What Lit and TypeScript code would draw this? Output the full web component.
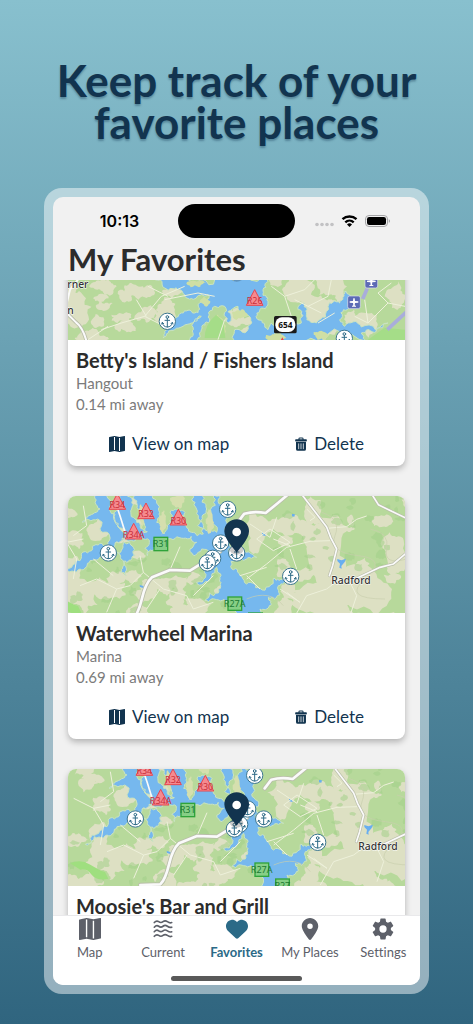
import { LitElement, html, svg, css } from "lit";
import { customElement, property, query } from "lit/decorators.js";
import { classMap } from "lit/directives/class-map.js";

type Pt = [number, number];

/** Deterministic random source, so that a map always looks the same. */
function randomFrom(seed: number) {
  let s = seed * 7919 + 17;
  return () => {
    s = (s * 1103515245 + 12345) % 2147483648;
    return s / 2147483648;
  };
}

function parse(points: string): Pt[] {
  return points.trim().split(/\s+/).map((p) => p.split(",").map(Number) as Pt);
}

/** Closed outline whose edges are broken up like a natural shoreline. */
function shore(points: string, seed: number, rough = 0.32, depth = 3): string {
  const rnd = randomFrom(seed);
  let pts = parse(points);
  for (let d = 0; d < depth; d++) {
    const next: Pt[] = [];
    pts.forEach((a, i) => {
      const b = pts[(i + 1) % pts.length];
      const dx = b[0] - a[0];
      const dy = b[1] - a[1];
      const k = (rnd() - 0.5) * 2 * rough;
      next.push(a);
      if (Math.hypot(dx, dy) > 8) {
        next.push([(a[0] + b[0]) / 2 - dy * k, (a[1] + b[1]) / 2 + dx * k]);
      }
    });
    pts = next;
  }
  return "M" + pts.map((p) => p[0].toFixed(1) + " " + p[1].toFixed(1)).join("L") + "Z";
}

/** Scattered patches of open land: x, y, width, height. */
function patches(list: number[][], seed: number): string {
  const rnd = randomFrom(seed);
  return list
    .map(([x, y, w, h], n) => {
      const ring: string[] = [];
      for (let i = 0; i < 10; i++) {
        const a = (i / 10) * Math.PI * 2;
        const r = 0.3 + rnd() * 0.3;
        ring.push(`${(x + Math.cos(a) * w * r).toFixed(0)},${(y + Math.sin(a) * h * r).toFixed(0)}`);
      }
      return shore(ring.join(" "), seed + n, 0.25, 2);
    })
    .join("");
}

function scatter(count: number, x0: number, x1: number, y0: number, y1: number, size: number, seed: number): number[][] {
  const rnd = randomFrom(seed);
  return Array.from({ length: count }, () => [
    x0 + rnd() * (x1 - x0),
    y0 + rnd() * (y1 - y0),
    size * (0.5 + rnd()),
    size * (0.4 + rnd() * 0.8),
  ]);
}

const anchor = (x: number, y: number) => svg`
  <g transform="translate(${x} ${y})">
    <circle r="24.5" fill="#fff" stroke="#3c7690" stroke-width="3"></circle>
    <g fill="none" stroke="#2f6b87" stroke-width="3" stroke-linecap="round" stroke-linejoin="round">
      <circle cy="-13" r="4"></circle>
      <path d="M0-9V17M-7-3H7M-15 4c1 8 7 13 15 13s14-5 15-13M-17 8l2-5 4 4M17 8l-2-5-4 4"></path>
    </g>
  </g>`;

const redMark = (x: number, y: number, label: string) => svg`
  <path d="M${x} ${y - 24}l25 47h-50z" fill="#f58a8f" stroke="#e8464f" stroke-width="3"></path>
  <text class="mark red" x=${x} y=${y + 19}>${label}</text>`;

const greenMark = (x: number, y: number, label: string) => svg`
  <rect x=${x - 20} y=${y - 20} width="41" height="40" fill="#86cf86" stroke="#2fa33a" stroke-width="4"></rect>
  <text class="mark green" x=${x} y=${y + 10}>${label}</text>`;

const airport = (x: number, y: number) => svg`
  <rect x=${x - 19} y=${y - 19} width="38" height="38" rx="6" fill="#5c6bb5" stroke="#dfe3ee" stroke-width="2"></rect>
  <path transform="translate(${x} ${y})" d="M-2-12h4l1 8 10 1v4l-10 1-1 7 4 2v2H-6v-2l4-2-1-7-10-1v-4l10-1z" fill="#fff"></path>`;

const pin = (x: number, y: number) => svg`
  <ellipse cx=${x} cy=${y - 8} rx="20" ry="14" fill="#111" opacity=".22"></ellipse>
  <path d="M${x} ${y}c-9-14-37-40-37-64a37 36 0 0 1 74 0c0 24-28 50-37 64z" fill="#12344f"></path>
  <circle cx=${x} cy=${y - 62} r="13" fill="#fff"></circle>`;

const bayLand = patches(
  [
    ...scatter(24, -60, 250, 30, 400, 60, 4),
    ...scatter(14, 270, 500, 250, 400, 60, 9),
    ...scatter(22, 560, 1040, 30, 400, 64, 12),
    [810, 220, 130, 260], [900, 300, 240, 140], [790, 340, 190, 110], [60, 310, 120, 120], [690, 110, 120, 60],
    [590, 130, 60, 130], [760, 60, 60, 90], [1000, 200, 80, 160], [140, 300, 130, 60],
  ],
  3
);
const bayShade = patches([...scatter(40, -60, 500, 190, 400, 26, 31), ...scatter(34, 640, 1040, 20, 240, 26, 44)], 7);
const bayWater =
  shore("100,15 145,15 165,75 190,130 200,150 165,168 150,190 120,205 90,215 60,240 15,258 -5,268 15,240 60,215 95,185 130,170 142,130 120,95 66,100 85,80 120,60", 2) +
  shore("180,15 200,15 215,60 230,100 250,130 262,128 245,90 232,50 222,15 275,15 295,60 290,100 312,135 330,95 345,60 375,70 365,105 395,130 430,135 415,80 395,30 400,15 430,15 440,60 425,100 445,130 470,130 452,80 462,15 485,15 480,60 500,100 515,140 505,190 530,210 560,190 590,205 550,215 512,232 545,262 560,285 600,298 640,268 672,262 655,290 660,318 625,325 628,350 600,360 610,420 520,420 505,350 470,332 435,335 475,312 480,270 470,235 430,285 410,280 440,235 452,190 425,180 405,200 390,180 410,160 370,148 320,150 290,180 262,200 268,160 250,150 215,155 185,150 195,120", 5) +
  shore("190,160 220,175 225,200 195,215 198,260 182,250 190,215 172,190", 8);
const bayIslands = patches([[308, 100, 26, 70], [450, 100, 24, 70], [245, 80, 16, 80], [352, 40, 50, 40]], 15);

const bayMap = svg`
  <rect x="-100" width="1200" height="450" fill="#b7d99b"></rect>
  <path d=${bayLand} fill="#dde0c3"></path>
  <path d=${bayShade} fill="#a3cf88" opacity=".55"></path>
  <path d="M-50 325q30-14 60 4t44 22l10 20q-34 8-50-12T-20 344z" fill="#9fdf7f"></path>
  <path d=${bayWater} fill="#76b8ee" stroke="#c9e3c0" stroke-width="3" fill-rule="nonzero"></path>
  <path d=${bayIslands} fill="#d5dfae"></path>
  <path d="M832 210l12 4 14-5-4 10-10 12 1 8-7-3 2-12-8-8zM606 130l10 5 1 6-10-2zM696 75l9 1-2 7-7-1zM239 288l12 3-1 6-10-3z" fill="#68aef0"></path>
  <g fill="none" stroke="#edf0da" stroke-width="3" stroke-linejoin="round">
    <path d="M-40 130l60 30 50-10M20 160l30 50-10 60M70 50l10 60-40 30M240 200l10 50-40 40-40 10-30 70M170 300l-60-30-50 20M250 250l60 50 70 20 20 40 60-20M400 320l60-60M330 243l30-70M300 300l-40 60M100 210l60 50"></path>
    <path d="M570 105l60 40 20-60M590 150l40-30 60 40-50 25zM560 270l60-45 60-50 70-18 60-2M690 180l20 60M800 118l60-5 30-22 30-10M640 150l50 20M740 60l25 25-15 10M560 260l40 40M540 260l80-25M700 390l40-70 60-20 40-30M720 340l-60-40M870 280l20 40-20 60M680 310l40 30"></path>
  </g>
  <path d="M785 70q60 20 40 70t70 60 20 70 60 60M560 330q70-30 110 20M930 120q60 10 50 60t60 30" fill="none" stroke="#c9cfae" stroke-width="2"></path>
  <g fill="none" stroke-linejoin="round" stroke-linecap="round">
    <path d="M160 390l60-2q15-14 26-60t30-63l54-22 60 2 45-28 45-30M533 100l20-26q30-8 64-2l34-28 36-30" stroke="#b9bda9" stroke-width="13"></path>
    <path d="M160 390l60-2q15-14 26-60t30-63l54-22 60 2 45-28 45-30M533 100l20-26q30-8 64-2l34-28 36-30" stroke="#fafafa" stroke-width="8"></path>
    <path d="M722 12l78 102 12 32 18 34-12 50-10 30M935 15l20 32 40 20 60 28M890 268l70-33 40-10 36-30 20-6" stroke="#b9bda9" stroke-width="9"></path>
    <path d="M722 12l78 102 12 32 18 34-12 50-10 30M935 15l20 32 40 20 60 28M890 268l70-33 40-10 36-30 20-6M166 40l14 40 14 45" stroke="#fafafa" stroke-width="5"></path>
  </g>
  ${redMark(172, 38, "R34")}${redMark(258, 66, "R32")}${redMark(355, 85, "R30")}${redMark(221, 127, "R34A")}
  ${greenMark(302, 165, "R31")}${greenMark(524, 344, "R27A")}${greenMark(586, 392, "R27")}
  ${anchor(145, 192)}${anchor(503, 61)}${anchor(482, 162)}${anchor(458, 208)}${anchor(442, 222)}${anchor(530, 192)}${anchor(692, 262)}
  <text class="town" x="814" y="284">Radford</text>`;

const isleLand = patches(
  [
    ...scatter(24, 0, 330, 150, 360, 48, 21),
    ...scatter(16, 520, 900, 160, 360, 60, 27),
    [20, 260, 80, 110], [110, 190, 80, 50], [690, 200, 110, 90], [740, 260, 120, 90], [880, 300, 120, 80],
    [790, 190, 80, 80], [500, 280, 60, 50], [980, 220, 60, 90], [300, 260, 70, 80],
  ],
  41
);
const isleWater = shore(
  "250,165 350,165 390,175 480,165 600,165 585,200 600,225 580,255 570,290 600,320 610,300 640,320 700,300 690,260 708,240 715,280 745,300 780,250 815,240 830,205 845,215 838,260 815,290 830,310 880,312 960,300 925,325 880,330 900,355 700,360 510,360 500,320 540,310 548,285 510,250 480,300 470,250 440,250 425,295 400,320 380,355 364,350 376,320 400,280 370,300 345,310 320,320 285,345 290,325 320,300 340,270 380,270 395,240 420,215 385,225 350,215 335,200 290,195",
  6
);
const isleIslands = patches([[380, 182, 70, 20], [515, 275, 56, 30], [455, 310, 40, 70], [620, 345, 60, 30], [410, 235, 30, 30], [760, 335, 60, 28]], 18);

const isleMap = svg`
  <rect width="1011" height="360" fill="#b7d99b"></rect>
  <path d=${isleLand} fill="#dde0c3"></path>
  <path d=${isleWater} fill="#76b8ee" stroke="#c9e3c0" stroke-width="3"></path>
  <path d=${isleIslands} fill="#cfdfa4"></path>
  <path d="M410 345q0-40 34-70l22 20 6 50zM900 350l50-36 61 6v40H900z" fill="#a5dd88"></path>
  <g fill="none" stroke="#edf0da" stroke-width="3" stroke-linejoin="round">
    <path d="M100 320l60-20 70-20 50-60 70-30M205 230l30 50M230 280l60 30M290 230l100-20 50 10M240 190l60 30M60 350l60-40M610 190l40 30 60-20 30-30M650 220l20 60M720 250l60-30 10-50M680 230l80 40M860 280l40 20 60-60-30-30 40-30M900 300l-10-70M960 240l51 10M750 300l50-30M450 350l20-60"></path>
  </g>
  <path d="M-6 268l30 30q20 14 32 58" fill="none" stroke="#b9bda9" stroke-width="11"></path>
  <path d="M-6 268l30 30q20 14 32 58M-6 250l12-50 24-30" fill="none" stroke="#fafafa" stroke-width="6"></path>
  <path d="M898 196l-14 32M1020 262l-62 58" fill="none" stroke="#a9addb" stroke-width="11"></path>
  ${redMark(560, 224, "R26")}
  <path d="M643 343l9 16h-18z" fill="#e8464f"></path>
  ${airport(858, 238)}${airport(910, 176)}
  <rect x="618" y="279" width="68" height="52" rx="5" fill="#1b1b1b"></rect>
  <rect x="622" y="283" width="60" height="44" rx="20" fill="#fff"></rect>
  <text class="route" x="652" y="314">654</text>
  ${anchor(298, 295)}${anchor(829, 346)}
  <text class="town" x="-2" y="196">rner</text>
  <text class="town" x="-2" y="273">n</text>`;

const MAP_ICON =
  "M16 .5a.5.5 0 0 0-.598-.49L10.5.99 5.598.01a.5.5 0 0 0-.196 0l-5 1A.5.5 0 0 0 0 1.5v14a.5.5 0 0 0 .598.49l4.902-.98 4.902.98a.5.5 0 0 0 .196 0l5-1A.5.5 0 0 0 16 14.5zM5 14.09V1.11l.5-.1.5.1v12.98l-.402-.08a.5.5 0 0 0-.196 0zm5 .8V1.91l.402.08a.5.5 0 0 0 .196 0L11 1.91v12.98l-.5.1z";

const mapIcon = html`<svg viewBox="0 0 16 16" aria-hidden="true"><path fill="currentColor" d=${MAP_ICON} /></svg>`;
const trashIcon = html`<svg viewBox="1 0 14 16" aria-hidden="true">
  <path fill="currentColor" d="M2 2.500h3V2a1.700 1.700 0 0 1 1.700-1.700h2.600A1.700 1.700 0 0 1 11 2v.5h3a.8.8 0 0 1 .8.8v.9a.8.8 0 0 1-.8.8H2a.8.8 0 0 1-.8-.8v-.9a.8.8 0 0 1 .8-.8zm4.300 0h3.400v-.9H6.300zM2.200 5.800h11.600V14a2 2 0 0 1-2 2H4.200a2 2 0 0 1-2-2z" />
  <path stroke="#fff" stroke-width=".9" d="M5.300 7.300v6.700M8 7.300v6.700M10.700 7.300v6.700" />
</svg>`;

const tabs = [
  { label: "Map", icon: mapIcon },
  {
    label: "Current",
    icon: html`<svg viewBox="0 0 24 24" aria-hidden="true">
      <g fill="none" stroke="currentColor" stroke-width="1.800" stroke-linecap="round">
        ${[5, 10, 15, 20].map((y) => svg`<path d="M2.500 ${y}q2.400-2.800 4.800-1t4.700 0 4.800 0 4.700 1" />`)}
      </g>
    </svg>`,
  },
  {
    label: "Favorites",
    icon: html`<svg viewBox="0 0 512 512" aria-hidden="true">
      <path fill="currentColor" d="M47.600 300.400L228.300 469.100c7.500 7 17.400 10.900 27.700 10.900s20.200-3.900 27.700-10.900L464.400 300.400c30.400-28.300 47.600-68 47.600-109.500v-5.800c0-69.900-50.500-129.500-119.400-141C347 36.500 300.600 51.400 268 84L256 96 244 84c-32.600-32.600-79-47.500-124.600-39.900C50.500 55.600 0 115.200 0 185.100v5.800c0 41.500 17.200 81.200 47.600 109.500z" />
    </svg>`,
  },
  {
    label: "My Places",
    icon: html`<svg viewBox="0 0 384 512" aria-hidden="true">
      <path fill="currentColor" d="M215.700 499.200C267 435 384 279.400 384 192 384 86 298 0 192 0S0 86 0 192c0 87.400 117 243 168.300 307.200 12.300 15.300 35.100 15.300 47.400 0zM192 128a64 64 0 1 1 0 128 64 64 0 1 1 0-128z" />
    </svg>`,
  },
  {
    label: "Settings",
    icon: html`<svg viewBox="2 2 20 20" aria-hidden="true">
      <path fill="currentColor" d="M19.140 12.940c.04-.3.06-.61.06-.94 0-.32-.02-.64-.07-.94l2.030-1.580a.49.49 0 0 0 .12-.61l-1.920-3.320a.488.488 0 0 0-.59-.22l-2.390.96c-.5-.38-1.030-.7-1.620-.94l-.36-2.540a.484.484 0 0 0-.48-.41h-3.840c-.24 0-.43.17-.47.41l-.36 2.540c-.59.24-1.130.57-1.620.94l-2.390-.96a.48.48 0 0 0-.59.22L2.740 8.870c-.12.21-.08.47.12.61l2.030 1.580c-.05.3-.09.63-.09.94s.02.64.07.94l-2.030 1.580a.49.49 0 0 0-.12.61l1.920 3.320c.12.22.37.29.59.22l2.390-.96c.5.38 1.030.7 1.620.94l.36 2.540c.05.24.24.41.48.41h3.840c.24 0 .44-.17.47-.41l.36-2.540c.59-.24 1.130-.56 1.620-.94l2.390.96c.22.08.47 0 .59-.22l1.920-3.320a.48.48 0 0 0-.12-.61zM12 15.300a3.300 3.300 0 1 1 0-6.600 3.300 3.300 0 0 1 0 6.600z" />
    </svg>`,
  },
];

interface Place {
  name: string;
  kind: string;
  distance: string;
  scene: "isle" | "bay";
  view: [number, number];
}

const places: Place[] = [
  { name: "Betty's Island / Fishers Island", kind: "Hangout", distance: "0.14 mi away", scene: "isle", view: [0, 0] },
  { name: "Waterwheel Marina", kind: "Marina", distance: "0.69 mi away", scene: "bay", view: [24, 21] },
  { name: "Moosie's Bar and Grill", kind: "Restaurant", distance: "0.72 mi away", scene: "bay", view: [-57, 42] },
];

@customElement("place-card")
export class PlaceCard extends LitElement {
  @property({ attribute: false }) place!: Place;

  static styles = css`
    :host {
      display: block;
      flex: none;
      overflow: hidden;
      border-radius: 8px;
      background: #fff;
      box-shadow: 0 3px 6px rgba(0, 0, 0, 0.26);
    }
    .map {
      display: block;
      width: 100%;
      height: 117px;
    }
    .map text {
      font-family: "Noto Sans", sans-serif;
    }
    .mark {
      font-size: 27px;
      text-anchor: middle;
    }
    .red {
      fill: #c9303b;
    }
    .green {
      fill: #1d7a33;
    }
    .town {
      font-size: 31px;
      fill: #333;
      font-weight: 500;
      stroke: #fff;
      stroke-width: 3px;
      paint-order: stroke;
    }
    .route {
      font-size: 25px;
      font-weight: 700;
      text-anchor: middle;
      fill: #111;
    }
    .body {
      padding: 8px 8px 7px;
    }
    h2 {
      margin: 0;
      font-size: 20px;
      line-height: 25px;
      font-weight: 700;
      color: #2c2c2c;
    }
    p {
      margin: 0;
      font-size: 15px;
      line-height: 21px;
      color: #7b7b7b;
    }
    .actions {
      display: flex;
      justify-content: space-around;
      margin-top: 13px;
    }
    button {
      display: flex;
      align-items: center;
      gap: 7px;
      height: 31px;
      padding: 0;
      border: 0;
      background: none;
      color: #12344f;
      font: inherit;
      font-size: 17px;
      cursor: pointer;
    }
    button svg {
      width: 16px;
      height: 16px;
    }
    button.delete svg {
      width: 12px;
      height: 14px;
    }
  `;

  render() {
    const { name, kind, distance, scene, view } = this.place;
    const [x, y] = view;
    return html`
      <svg class="map" viewBox="${x} ${y} 1011 351" preserveAspectRatio="xMidYMid slice" role="img" aria-label="Map of ${name}">
        ${scene === "bay" ? bayMap : isleMap} ${pin(x + 506, y + 170)}
      </svg>
      <div class="body">
        <h2>${name}</h2>
        <p>${kind}</p>
        <p>${distance}</p>
        <div class="actions">
          <button type="button">${mapIcon}View on map</button>
          <button type="button" class="delete">${trashIcon}Delete</button>
        </div>
      </div>
    `;
  }
}

@customElement("app-root")
export class AppRoot extends LitElement {
  @property({ type: Number }) scrolled = 57;
  @query(".list") private list!: HTMLElement;

  static styles = css`
    :host {
      display: flex;
      flex-direction: column;
      box-sizing: border-box;
      height: 100vh;
      min-height: 600px;
      padding: 59px 44px 30px;
      background: linear-gradient(#88c0ce, #30657f);
      font-family: Lato, "Noto Sans", sans-serif;
    }
    .headline {
      margin: 0 0 45px;
      font-size: 44px;
      line-height: 42px;
      font-weight: 700;
      text-align: center;
      color: #12344f;
      text-shadow: 0 2px 2px rgba(18, 52, 79, 0.35);
    }
    .frame {
      display: flex;
      flex: 1;
      min-height: 0;
      padding: 9px;
      border-radius: 18px;
      background: rgba(255, 255, 255, 0.48);
    }
    .screen {
      display: flex;
      flex-direction: column;
      flex: 1;
      min-width: 0;
      overflow: hidden;
      border-radius: 10px;
      background: #f1f1f1;
    }
    .status {
      display: grid;
      grid-template-columns: 1fr 117px 1fr;
      align-items: center;
      padding-top: 7px;
    }
    .time {
      padding-left: 8px;
      text-align: center;
      font: 600 16px/20px Inter, sans-serif;
      color: #000;
    }
    .island {
      height: 34px;
      border-radius: 17px;
      background: #000;
    }
    .signals {
      justify-self: center;
      width: 76px;
      height: 14px;
      margin-right: 12px;
    }
    h1 {
      margin: 0;
      padding: 0 15px;
      font-size: 31px;
      line-height: 42px;
      font-weight: 700;
      color: #2c2c2c;
    }
    .list {
      display: flex;
      flex-direction: column;
      flex: 1;
      gap: 30px;
      min-height: 0;
      padding: 0 15px 30px;
      overflow-y: auto;
      scrollbar-width: none;
    }
    .tabs {
      display: flex;
      border-top: 1px solid #e9e9eb;
      background: #fff;
    }
    .tab {
      display: flex;
      flex: 1 1 0;
      flex-direction: column;
      align-items: center;
      gap: 2px;
      padding-top: 2px;
      text-decoration: none;
      font-size: 13px;
      line-height: 20px;
      font-variant-ligatures: none;
      white-space: nowrap;
      color: #5d6069;
    }
    .tab svg {
      width: 22px;
      height: 22px;
    }
    .active {
      font-weight: 700;
      color: #2b6a87;
    }
    .home {
      display: flex;
      justify-content: center;
      padding: 14px 0 4px;
      background: #fff;
    }
    .bar {
      width: 131px;
      height: 5px;
      border-radius: 3px;
      background: #595959;
    }
  `;

  /** Restores the scroll position once every card has its full height. */
  async firstUpdated() {
    const cards = Array.from(this.list.querySelectorAll<PlaceCard>("place-card"));
    await Promise.all(cards.map((card) => card.updateComplete));
    this.list.scrollTop = this.scrolled;
  }

  render() {
    return html`
      <div class="headline">Keep track of your<br />favorite places</div>
      <div class="frame">
        <main class="screen">
          <div class="status">
            <div class="time">10:13</div>
            <div class="island"></div>
            <svg class="signals" viewBox="0 0 76 14" aria-hidden="true">
              <g fill="#c2c2c4">
                <circle cx="3" cy="10.500" r="1.800" /><circle cx="8" cy="10.500" r="1.800" />
                <circle cx="13" cy="10.500" r="1.800" /><circle cx="18" cy="10.500" r="1.800" />
              </g>
              <g fill="none" stroke="#000" stroke-width="2.400">
                <path d="M28.500 5.200a10.300 10.300 0 0 1 14 0" /><path d="M31.300 8.300a6.200 6.200 0 0 1 8.400 0" />
              </g>
              <path d="M35.500 13l-2.500-2.600a3.700 3.700 0 0 1 5 0z" />
              <rect x="51.500" y="1.500" width="22" height="11" rx="3.500" fill="none" stroke="#a5a5a7" />
              <rect x="53" y="3" width="19" height="8" rx="2.200" />
              <path d="M74.800 5.200v3.600q1.200-.4 1.200-1.800t-1.200-1.800z" fill="#a5a5a7" />
            </svg>
          </div>
          <h1>My Favorites</h1>
          <div class="list">${places.map((place) => html`<place-card .place=${place}></place-card>`)}</div>
          <nav class="tabs">
            ${tabs.map(
              ({ label, icon }) => html`<a href="#" class=${classMap({ tab: true, active: label === "Favorites" })}>${icon}${label}</a>`
            )}
          </nav>
          <div class="home"><div class="bar"></div></div>
        </main>
      </div>
    `;
  }
}
